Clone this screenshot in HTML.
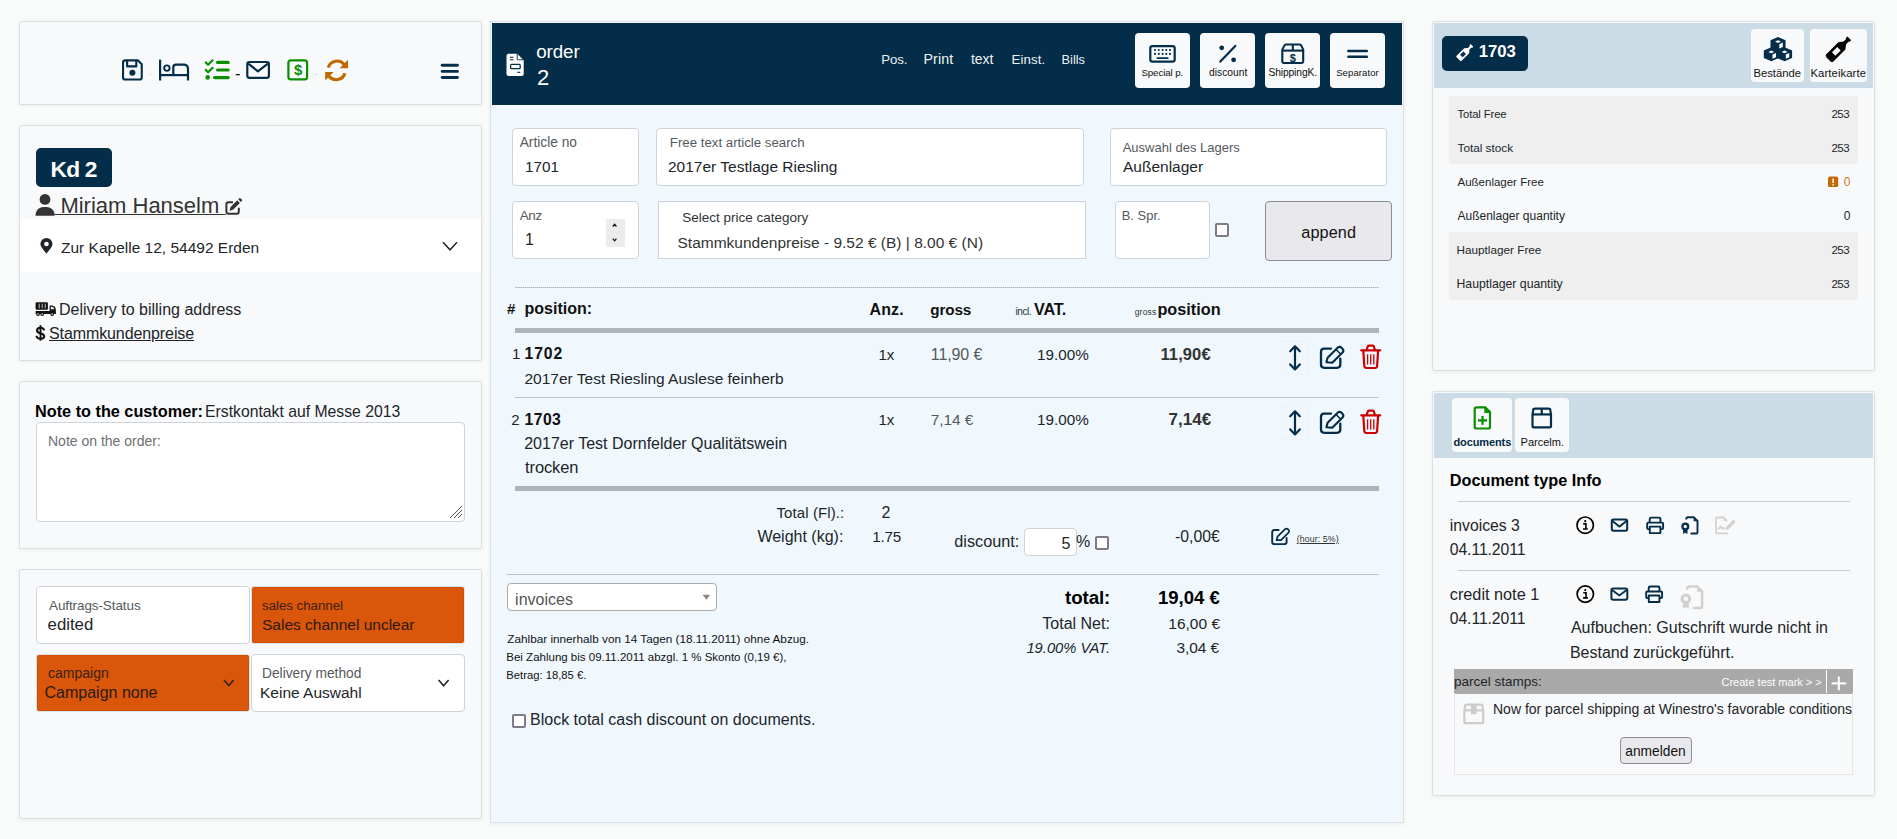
<!DOCTYPE html>
<html><head><meta charset="utf-8"><title>order</title>
<style>
html,body{margin:0;padding:0;width:1897px;height:839px;overflow:hidden;background:#f9fafa;font-family:"Liberation Sans",sans-serif}
.t{position:absolute;line-height:120px;white-space:nowrap}
svg{display:block}
</style></head><body>
<div style="position:absolute;left:19px;top:21px;width:463px;height:84px;box-sizing:border-box;background:#f8f9fa;border:1px solid #dcdfe3;border-radius:2px;box-shadow:0 1px 4px rgba(0,0,0,0.06)"></div>
<div style="position:absolute;left:19px;top:125px;width:463px;height:236px;box-sizing:border-box;background:#f8f9fa;border:1px solid #dcdfe3;border-radius:2px;box-shadow:0 1px 4px rgba(0,0,0,0.06)"></div>
<div style="position:absolute;left:20px;top:219px;width:461px;height:53px;box-sizing:border-box;background:#ffffff"></div>
<div style="position:absolute;left:19px;top:381px;width:463px;height:168px;box-sizing:border-box;background:#f8f9fa;border:1px solid #dcdfe3;border-radius:2px;box-shadow:0 1px 4px rgba(0,0,0,0.06)"></div>
<div style="position:absolute;left:19px;top:569px;width:463px;height:250px;box-sizing:border-box;background:#f8f9fa;border:1px solid #dcdfe3;border-radius:2px;box-shadow:0 1px 4px rgba(0,0,0,0.06)"></div>
<div style="position:absolute;left:490px;top:21px;width:914px;height:802px;box-sizing:border-box;background:#f0f8fe;border:1px solid #dcdfe3;box-shadow:0 1px 4px rgba(0,0,0,0.06)"></div>
<div style="position:absolute;left:492px;top:23px;width:910px;height:82px;box-sizing:border-box;background:#032d48"></div>
<div style="position:absolute;left:1432px;top:21px;width:443px;height:350px;box-sizing:border-box;background:#f8f9fa;border:1px solid #dcdfe3;border-radius:2px;box-shadow:0 1px 4px rgba(0,0,0,0.06)"></div>
<div style="position:absolute;left:1434px;top:23px;width:439px;height:65px;box-sizing:border-box;background:#cbdce6"></div>
<div style="position:absolute;left:1432px;top:391px;width:443px;height:405px;box-sizing:border-box;background:#f8f9fa;border:1px solid #dcdfe3;border-radius:2px;box-shadow:0 1px 4px rgba(0,0,0,0.06)"></div>
<div style="position:absolute;left:1434px;top:393px;width:439px;height:65px;box-sizing:border-box;background:#cbdce6"></div>
<div style="position:absolute;left:36px;top:148px;width:76px;height:39px;box-sizing:border-box;background:#032d48;border-radius:5px"></div>
<div style="position:absolute;left:36px;top:422px;width:429px;height:100px;box-sizing:border-box;background:#fff;border:1px solid #ced4da;border-radius:4px"></div>
<div style="position:absolute;left:36px;top:586px;width:214px;height:58px;box-sizing:border-box;background:#fff;border:1px solid #ced4da;border-radius:4px"></div>
<div style="position:absolute;left:251px;top:586px;width:214px;height:58px;box-sizing:border-box;background:#d9560b;border:1px solid #d6e4ee;border-radius:3px;box-shadow:inset 0 0 0 1px #d84c00"></div>
<div style="position:absolute;left:36px;top:654px;width:214px;height:58px;box-sizing:border-box;background:#d9560b;border:1px solid #d6e4ee;border-radius:3px;box-shadow:inset 0 0 0 1px #d84c00"></div>
<div style="position:absolute;left:251px;top:654px;width:214px;height:58px;box-sizing:border-box;background:#fff;border:1px solid #ced4da;border-radius:4px"></div>
<div style="position:absolute;left:1135px;top:33px;width:55px;height:55px;box-sizing:border-box;background:#f8f9fa;border-radius:4px"></div>
<div style="position:absolute;left:1200px;top:33px;width:55px;height:55px;box-sizing:border-box;background:#f8f9fa;border-radius:4px"></div>
<div style="position:absolute;left:1265px;top:33px;width:55px;height:55px;box-sizing:border-box;background:#f8f9fa;border-radius:4px"></div>
<div style="position:absolute;left:1330px;top:33px;width:55px;height:55px;box-sizing:border-box;background:#f8f9fa;border-radius:4px"></div>
<div style="position:absolute;left:512px;top:128px;width:127px;height:58px;box-sizing:border-box;background:#fff;border:1px solid #ced4da;border-radius:4px"></div>
<div style="position:absolute;left:656px;top:128px;width:428px;height:58px;box-sizing:border-box;background:#fff;border:1px solid #ced4da;border-radius:4px"></div>
<div style="position:absolute;left:1110px;top:128px;width:277px;height:58px;box-sizing:border-box;background:#fff;border:1px solid #ced4da;border-radius:4px"></div>
<div style="position:absolute;left:512px;top:201px;width:127px;height:58px;box-sizing:border-box;background:#fff;border:1px solid #ced4da;border-radius:4px"></div>
<div style="position:absolute;left:606px;top:219px;width:19px;height:28px;box-sizing:border-box;background:#ececec"></div>
<div style="position:absolute;left:658px;top:201px;width:428px;height:58px;box-sizing:border-box;background:#fff;border:1px solid #ced4da"></div>
<div style="position:absolute;left:1115px;top:201px;width:95px;height:58px;box-sizing:border-box;background:#fff;border:1px solid #ced4da;border-radius:4px"></div>
<div style="position:absolute;left:1215px;top:223px;width:14px;height:14px;box-sizing:border-box;background:#fff;border:2px solid #7d7b8a;border-radius:2px"></div>
<div style="position:absolute;left:1265px;top:201px;width:127px;height:60px;box-sizing:border-box;background:#e9e8ed;border:1px solid #8a8d92;border-radius:4px"></div>
<div style="position:absolute;left:515px;top:287px;width:864px;height:1px;box-sizing:border-box;background:repeating-linear-gradient(90deg,#aab0b4 0 1px,#d2d7da 1px 2px)"></div>
<div style="position:absolute;left:515px;top:328px;width:864px;height:5px;box-sizing:border-box;background:#aeb4b8"></div>
<div style="position:absolute;left:515px;top:397px;width:864px;height:1px;box-sizing:border-box;background:repeating-linear-gradient(90deg,#aab0b4 0 1px,#d2d7da 1px 2px)"></div>
<div style="position:absolute;left:515px;top:486px;width:864px;height:5px;box-sizing:border-box;background:#aeb4b8"></div>
<div style="position:absolute;left:507px;top:574px;width:872px;height:1px;box-sizing:border-box;background:repeating-linear-gradient(90deg,#aab0b4 0 1px,#d2d7da 1px 2px)"></div>
<div style="position:absolute;left:1282px;top:341px;width:26px;height:34px;box-sizing:border-box;border:1px dotted #e9eef2"></div>
<div style="position:absolute;left:1282px;top:406px;width:26px;height:34px;box-sizing:border-box;border:1px dotted #e9eef2"></div>
<div style="position:absolute;left:1024px;top:528px;width:53px;height:28px;box-sizing:border-box;background:#fff;border:1px solid #ced4da;border-radius:4px"></div>
<div style="position:absolute;left:1095px;top:536px;width:14px;height:14px;box-sizing:border-box;background:#fff;border:2px solid #7d7b8a;border-radius:2px"></div>
<div style="position:absolute;left:507px;top:583px;width:210px;height:28px;box-sizing:border-box;background:#fff;border:1px solid #aaa;border-radius:4px"></div>
<div style="position:absolute;left:512px;top:714px;width:14px;height:14px;box-sizing:border-box;background:#fff;border:2px solid #7d7b8a;border-radius:2px"></div>
<div style="position:absolute;left:1442px;top:36px;width:86px;height:35px;box-sizing:border-box;background:#032d48;border-radius:5px"></div>
<div style="position:absolute;left:1751px;top:29px;width:53px;height:53px;box-sizing:border-box;background:#f8f9fa;border-radius:4px"></div>
<div style="position:absolute;left:1810px;top:29px;width:57px;height:53px;box-sizing:border-box;background:#f8f9fa;border-radius:4px"></div>
<div style="position:absolute;left:1449px;top:96px;width:409px;height:68px;box-sizing:border-box;background:#efefef"></div>
<div style="position:absolute;left:1449px;top:232px;width:409px;height:68px;box-sizing:border-box;background:#efefef"></div>
<div style="position:absolute;left:1452px;top:398px;width:60px;height:54px;box-sizing:border-box;background:#f8f9fa;border-radius:4px"></div>
<div style="position:absolute;left:1515px;top:398px;width:54px;height:54px;box-sizing:border-box;background:#f8f9fa;border-radius:4px"></div>
<div style="position:absolute;left:1458px;top:501px;width:392px;height:1px;box-sizing:border-box;border-top:1px solid #c8cbce"></div>
<div style="position:absolute;left:1458px;top:570px;width:392px;height:1px;box-sizing:border-box;border-top:1px solid #c8cbce"></div>
<div style="position:absolute;left:1454px;top:669px;width:399px;height:25px;box-sizing:border-box;background:#a9a9a9"></div>
<div style="position:absolute;left:1826px;top:670px;width:1px;height:23px;box-sizing:border-box;background:#fff"></div>
<div style="position:absolute;left:1454px;top:693px;width:399px;height:82px;box-sizing:border-box;border:1px solid #e6e6e6;border-top:none"></div>
<div style="position:absolute;left:1620px;top:737px;width:72px;height:27px;box-sizing:border-box;background:#e9e8ed;border:1px solid #8a8d92;border-radius:4px"></div>
<svg style="position:absolute;left:0;top:0;overflow:visible" width="1897" height="839" viewBox="0 0 1897 839"><g fill="none" stroke="#032d48" stroke-width="2.1" stroke-linejoin="round"><path d="M125.2,60.35 H137.8 L141.75,64.3 V77.4 Q141.75,79.45 139.7,79.45 H125.1 Q123.05,79.45 123.05,77.4 V62.4 Q123.05,60.35 125.2,60.35 Z"/><path d="M127.1,60.6 V66.4 H136.3 V60.6"/></g><circle cx="132.4" cy="72.8" r="3.0" fill="#032d48"/><rect x="149" y="74" width="4" height="1" fill="#e3e5e8"/><g fill="none" stroke="#032d48" stroke-width="2.2"><path d="M160.1,59.6 V80.5"/><path d="M160.1,75.1 H188"/><path d="M173.3,75.1 V67.2 Q173.3,64.6 175.9,64.6 H183.6 Q188,64.6 188,69 V80.5"/><circle cx="166.9" cy="68.1" r="2.75" stroke-width="1.9"/></g><g fill="none" stroke="#0a8f00" stroke-width="2.2" stroke-linecap="round" stroke-linejoin="round"><path d="M205.8,62.4 L208.1,64.8 L212.6,60.3"/><path d="M205.8,69.9 L208.1,72.3 L212.6,67.8"/></g><circle cx="207.7" cy="77.4" r="2.3" fill="#0a8f00"/><g stroke="#0a8f00" stroke-width="3.1" stroke-linecap="round"><path d="M217.5,62.4 H228.2"/><path d="M217.5,70 H228.2"/><path d="M214.6,77.6 H228.2"/></g><rect x="235.8" y="74" width="4" height="1.3" fill="#111"/><g fill="none" stroke="#032d48" stroke-width="2.2" stroke-linejoin="round"><rect x="247.3" y="62" width="21.6" height="15.8" rx="2"/><path d="M248.3,63.6 L257.9,71.3 L267.9,63.6"/></g><rect x="288.4" y="60.4" width="18.7" height="19" rx="2.4" fill="none" stroke="#0a8f00" stroke-width="2.2"/><text x="298.2" y="74.8" text-anchor="middle" font-family="Liberation Sans" font-weight="700" font-size="15" fill="#0a8f00">$</text><rect x="314" y="74" width="4.5" height="1" fill="#e3e5e8"/><g fill="none" stroke="#c36800" stroke-width="3.1"><path d="M328.2,67.6 A9.2,9.2 0 0 1 344.3,64.6"/><path d="M344.9,73.2 A9.2,9.2 0 0 1 328.9,76.2"/></g><path d="M348,59.8 V68.2 H339.6 Z" fill="#c36800"/><path d="M325.2,80.5 V72.1 H333.6 Z" fill="#c36800"/><g stroke="#032d48" stroke-width="2.9" stroke-linecap="round"><path d="M442.2,65.2 H457.4"/><path d="M442.2,71.4 H457.4"/><path d="M442.2,77.5 H457.4"/></g><circle cx="45" cy="199.4" r="5.4" fill="#333"/><path d="M35.5,215.8 C35.5,210.5 38.6,207 43.6,207 H46.4 C51.5,207 54.7,210.5 54.7,215.8 Z" fill="#333"/><rect x="54.7" y="214" width="171" height="1" fill="#333"/><g fill="none" stroke="#333" stroke-width="2"><path d="M233,202.3 H228.6 Q226.4,202.3 226.4,204.5 V211.6 Q226.4,213.8 228.6,213.8 H236.6 Q238.8,213.8 238.8,211.6 V207.8"/></g><path d="M229.4,210.9 L230.6,206.9 L237.2,200.3 L239.9,203 L233.3,209.6 Z" fill="#333"/><path d="M238.2,199.3 L239.1,198.4 Q239.9,197.6 240.7,198.4 L241.8,199.5 Q242.6,200.3 241.8,201.1 L240.9,202 Z" fill="#333"/><path d="M46.45,253.8 C44.2,250.6 40.4,246.9 40.4,244 A6.05,6.05 0 0 1 52.5,244 C52.5,246.9 48.7,250.6 46.45,253.8 Z" fill="#212529"/><circle cx="46.45" cy="244" r="2.3" fill="#fff"/><path d="M443,242.2 L450,249.8 L457,242.2" fill="none" stroke="#212529" stroke-width="1.5"/><rect x="35.6" y="302.2" width="12.3" height="7.6" rx="1.2" fill="#111"/><g stroke="#ddd" stroke-width="0.9"><path d="M39.2,303.6 V308.4"/><path d="M42.2,303.6 V308.4"/><path d="M45.2,303.6 V308.4"/></g><path d="M49.6,305.5 H52.5 Q55.9,306.5 55.9,310.5 V314 H35.6 V311 H49.6 Z" fill="#111"/><path d="M50.8,306.7 H52.3 Q54,307.3 54.3,309.3 H50.8 Z" fill="#eee"/><circle cx="38" cy="314" r="1.9" fill="#111"/><circle cx="42.2" cy="314" r="1.9" fill="#111"/><circle cx="52.2" cy="314" r="1.9" fill="#111"/><circle cx="38" cy="314" r="0.8" fill="#eee"/><circle cx="42.2" cy="314" r="0.8" fill="#eee"/><circle cx="52.2" cy="314" r="0.8" fill="#eee"/><path d="M40.5,325.2 V340.7" stroke="#111" stroke-width="1.9"/><path d="M43.9,329.6 C43.2,328.3 42,327.7 40.4,327.7 C38.3,327.7 37,328.7 37,330.6 C37,334.6 44.2,332.6 44.2,336.2 C44.2,337.9 42.8,338.7 40.6,338.7 C38.7,338.7 37.3,338 36.6,336.6" fill="none" stroke="#111" stroke-width="2.1" stroke-linecap="round"/><g stroke="#555" stroke-width="1"><path d="M450,518 L462,506"/><path d="M454,518 L462,510"/><path d="M458,518 L462,514"/></g><path d="M224,680 L228.8,685.6 L233.6,680" fill="none" stroke="#3a2110" stroke-width="1.6"/><path d="M438.6,680 L443.6,685.8 L448.6,680" fill="none" stroke="#212529" stroke-width="1.6"/><path d="M508.5,53.8 H517.2 L523.7,60.3 V73.9 Q523.7,76 521.6,76 H508.6 Q506.5,76 506.5,73.9 V55.9 Q506.5,53.8 508.5,53.8 Z" fill="#fff"/><path d="M517.2,53.8 V59.8 H523.7" fill="none" stroke="#032d48" stroke-width="0.9"/><g stroke="#032d48" stroke-width="1.1"><path d="M510,57.3 H513.4"/><path d="M510,59.8 H513.4"/><path d="M517.2,72.3 H520.3"/></g><rect x="510.6" y="64.3" width="9.6" height="4.4" rx="1" fill="none" stroke="#032d48" stroke-width="1.3"/><rect x="1150.3" y="46.1" width="24.4" height="15.6" rx="2.2" fill="none" stroke="#032d48" stroke-width="2.2"/><circle cx="1155" cy="50" r="1.05" fill="#032d48"/><circle cx="1155" cy="53.9" r="1.05" fill="#032d48"/><circle cx="1158.8" cy="50" r="1.05" fill="#032d48"/><circle cx="1158.8" cy="53.9" r="1.05" fill="#032d48"/><circle cx="1162.6" cy="50" r="1.05" fill="#032d48"/><circle cx="1162.6" cy="53.9" r="1.05" fill="#032d48"/><circle cx="1166.3" cy="50" r="1.05" fill="#032d48"/><circle cx="1166.3" cy="53.9" r="1.05" fill="#032d48"/><circle cx="1170" cy="50" r="1.05" fill="#032d48"/><circle cx="1170" cy="53.9" r="1.05" fill="#032d48"/><path d="M1157.3,58.1 H1167.8" stroke="#032d48" stroke-width="1.7" stroke-linecap="round"/><circle cx="1221.7" cy="47.8" r="2.4" fill="#032d48"/><circle cx="1233.6" cy="59.8" r="2.4" fill="#032d48"/><path d="M1220.3,61.6 L1235.3,45.9" stroke="#032d48" stroke-width="2.2" stroke-linecap="round"/><g fill="none" stroke="#032d48" stroke-width="2.1" stroke-linejoin="round"><path d="M1286,44.5 H1299.6 Q1300.8,44.5 1301.3,45.6 L1303.2,49.6 V61.6 Q1303.2,63 1301.8,63 H1283.7 Q1282.3,63 1282.3,61.6 V49.6 L1284.3,45.6 Q1284.8,44.5 1286,44.5 Z"/><path d="M1282.6,50.6 H1303"/><path d="M1292.8,44.6 V50.6"/></g><text x="1292.8" y="61.6" text-anchor="middle" font-family="Liberation Sans" font-weight="700" font-size="11" fill="#032d48">$</text><g stroke="#032d48" stroke-width="2.5" stroke-linecap="round"><path d="M1348.4,51 H1366.8"/><path d="M1348.4,56.8 H1366.8"/></g><path d="M612.8,226.5 L614.6,224.3 L616.4,226.5" fill="none" stroke="#111" stroke-width="1.2"/><path d="M612.8,238.6 L614.6,240.8 L616.4,238.6" fill="none" stroke="#111" stroke-width="1.2"/><g transform="translate(0,0)"><path d="M1295,347.5 V368.3" stroke="#032d48" stroke-width="2.2"/><path d="M1290.2,351.3 L1295,346.3 L1299.8,351.3" fill="none" stroke="#032d48" stroke-width="2.2" stroke-linecap="round" stroke-linejoin="round"/><path d="M1290.2,364.4 L1295,369.4 L1299.8,364.4" fill="none" stroke="#032d48" stroke-width="2.2" stroke-linecap="round" stroke-linejoin="round"/><path d="M1331,348.6 H1324.2 Q1321,348.6 1321,351.8 V364.6 Q1321,367.8 1324.2,367.8 H1337.1 Q1340.3,367.8 1340.3,364.6 V358.6" fill="none" stroke="#032d48" stroke-width="2.3" stroke-linecap="round"/><path d="M1326.4,362.3 L1327.6,357.7 L1337.4,347.9 Q1339.6,345.7 1341.8,347.9 L1342.3,348.4 Q1344.5,350.6 1342.3,352.8 L1332.5,362.6 Z" fill="none" stroke="#032d48" stroke-width="2.1" stroke-linejoin="round"/><path d="M1336,349.5 L1340.8,354.3" stroke="#032d48" stroke-width="1.6"/><g fill="none" stroke="#cc0000" stroke-width="2.2" stroke-linecap="round" stroke-linejoin="round"><path d="M1361.2,350.3 H1380.2"/><path d="M1366.6,350 L1367.8,346.4 Q1368.2,345.7 1369,345.7 H1372.6 Q1373.4,345.7 1373.8,346.4 L1374.9,350"/><path d="M1363.3,350.6 L1364.3,366 Q1364.5,368 1366.4,368 H1375 Q1376.9,368 1377.1,366 L1378.1,350.6"/></g><g stroke="#cc0000" stroke-width="1.3"><path d="M1367.6,354.3 V364.5"/><path d="M1370.7,354.3 V364.5"/><path d="M1373.8,354.3 V364.5"/></g></g><g transform="translate(0,65)"><path d="M1295,347.5 V368.3" stroke="#032d48" stroke-width="2.2"/><path d="M1290.2,351.3 L1295,346.3 L1299.8,351.3" fill="none" stroke="#032d48" stroke-width="2.2" stroke-linecap="round" stroke-linejoin="round"/><path d="M1290.2,364.4 L1295,369.4 L1299.8,364.4" fill="none" stroke="#032d48" stroke-width="2.2" stroke-linecap="round" stroke-linejoin="round"/><path d="M1331,348.6 H1324.2 Q1321,348.6 1321,351.8 V364.6 Q1321,367.8 1324.2,367.8 H1337.1 Q1340.3,367.8 1340.3,364.6 V358.6" fill="none" stroke="#032d48" stroke-width="2.3" stroke-linecap="round"/><path d="M1326.4,362.3 L1327.6,357.7 L1337.4,347.9 Q1339.6,345.7 1341.8,347.9 L1342.3,348.4 Q1344.5,350.6 1342.3,352.8 L1332.5,362.6 Z" fill="none" stroke="#032d48" stroke-width="2.1" stroke-linejoin="round"/><path d="M1336,349.5 L1340.8,354.3" stroke="#032d48" stroke-width="1.6"/><g fill="none" stroke="#cc0000" stroke-width="2.2" stroke-linecap="round" stroke-linejoin="round"><path d="M1361.2,350.3 H1380.2"/><path d="M1366.6,350 L1367.8,346.4 Q1368.2,345.7 1369,345.7 H1372.6 Q1373.4,345.7 1373.8,346.4 L1374.9,350"/><path d="M1363.3,350.6 L1364.3,366 Q1364.5,368 1366.4,368 H1375 Q1376.9,368 1377.1,366 L1378.1,350.6"/></g><g stroke="#cc0000" stroke-width="1.3"><path d="M1367.6,354.3 V364.5"/><path d="M1370.7,354.3 V364.5"/><path d="M1373.8,354.3 V364.5"/></g></g><path d="M1278.6,530 H1274.6 Q1272.2,530 1272.2,532.4 V541.9 Q1272.2,544.1 1274.6,544.1 H1284.2 Q1286.6,544.1 1286.6,541.9 V538" fill="none" stroke="#032d48" stroke-width="1.9" stroke-linecap="round"/><path d="M1276.6,540.2 L1277.5,536.7 L1284.8,529.4 Q1286.4,527.8 1288,529.4 L1288.3,529.7 Q1289.9,531.3 1288.3,532.9 L1281,540.2 Z" fill="none" stroke="#032d48" stroke-width="1.7" stroke-linejoin="round"/><path d="M702.6,594.8 H710.2 L706.4,599.8 Z" fill="#888"/><g transform="rotate(45 1465.5 51.9)"><path d="M1463.6,42.8 H1467.4 V44.6 H1466.6 V47.4 L1469,50.2 V61 Q1469,62 1468,62 H1463 Q1462,62 1462,61 V50.2 L1464.4,47.4 V44.6 H1463.6 Z" fill="#fff"/><rect x="1463.7" y="53" width="3.6" height="4.8" fill="#032d48"/></g><g fill="#032d48"><path d="M1778,37 L1785.5,40.2 V48.5 L1778,51.8 L1770.5,48.5 V40.2 Z"/><path d="M1771.3,47.3 L1778.8,50.5 V58.1 L1771.3,61.3 L1763.8,58.1 V50.5 Z"/><path d="M1784.6,47.3 L1792.1,50.5 V58.1 L1784.6,61.3 L1777.1,58.1 V50.5 Z"/></g><g fill="#fff"><path d="M1778,40.2 L1781,41.6 L1778,43 L1775,41.6 Z"/><path d="M1779.3,44.2 L1782.8,42.6 V47 L1779.3,48.5 Z"/><path d="M1771.3,50.5 L1774.3,51.9 L1771.3,53.3 L1768.3,51.9 Z"/><path d="M1772.5,54.5 L1776,52.9 V57.3 L1772.5,58.8 Z"/><path d="M1784.6,50.5 L1787.6,51.9 L1784.6,53.3 L1781.6,51.9 Z"/><path d="M1785.8,54.5 L1789.3,52.9 V57.3 L1785.8,58.8 Z"/></g><g transform="rotate(45 1838.8 48.9)"><path d="M1836.2,34 H1841.4 V36.6 H1840.6 V40.4 L1843.8,44.6 V61.6 Q1843.8,63.6 1841.8,63.6 H1835.8 Q1833.8,63.6 1833.8,61.6 V44.6 L1837,40.4 V36.6 H1836.2 Z" fill="#000"/><rect x="1836.4" y="48.6" width="4.8" height="7.6" fill="#f8f9fa"/></g><rect x="1828" y="176.6" width="10.2" height="10.4" rx="1.6" fill="#c36a0a"/><rect x="1832.4" y="178.6" width="1.5" height="4.4" fill="#fff"/><rect x="1832.4" y="184" width="1.5" height="1.5" fill="#fff"/><path d="M1476.7,407.3 H1485.2 L1490,412.1 V426.7 Q1490,428.5 1488.2,428.5 H1476.5 Q1474.7,428.5 1474.7,426.7 V409.1 Q1474.7,407.3 1476.7,407.3 Z" fill="none" stroke="#0a8f00" stroke-width="2.2" stroke-linejoin="round"/><path d="M1484.3,406.3 L1491.1,413 H1484.3 Z" fill="#0a8f00"/><g stroke="#0a8f00" stroke-width="2.3"><path d="M1478,420.4 H1487"/><path d="M1482.5,416 V424.8"/></g><g fill="none" stroke="#032d48" stroke-width="2.2" stroke-linejoin="round"><path d="M1535.4,408.6 H1548.1 Q1549.5,408.6 1550.1,409.1 L1551.0,414.43 V426.0 Q1551.0,427.4 1549.6,427.4 H1533.9 Q1532.5,427.4 1532.5,426.0 V414.43 L1533.4,409.1 Q1534.0,408.6 1535.4,408.6 Z"/><path d="M1532.5,414.43 H1551.0"/><path d="M1541.75,408.6 V414.43"/></g><g fill="none" stroke="#cccccc" stroke-width="2.2" stroke-linejoin="round"><path d="M1467.3,704.6 H1480.3 Q1481.7,704.6 1482.3,705.1 L1483.2,710.364 V721.8 Q1483.2,723.1999999999999 1481.8,723.1999999999999 H1465.8 Q1464.3999999999999,723.1999999999999 1464.3999999999999,721.8 V710.364 L1465.3,705.1 Q1465.8999999999999,704.6 1467.3,704.6 Z"/><path d="M1464.3999999999999,710.364 H1483.2"/></g><rect x="1471.0" y="704.5" width="5.6" height="9.775999999999978" rx="0.8" fill="#cccccc"/><circle cx="1585.2" cy="525.2" r="8.2" fill="none" stroke="#000" stroke-width="1.7"/><circle cx="1585.2" cy="521.2" r="1.1" fill="#000"/><path d="M1583.2,523.9000000000001 H1585.9 V528.8000000000001 M1583.0,529.0 H1587.8" fill="none" stroke="#000" stroke-width="1.6"/><rect x="1611.8" y="519.5" width="15.400000000000091" height="11.299999999999955" rx="1.8" fill="none" stroke="#032d48" stroke-width="2"/><path d="M1612.3999999999999,521.1 L1619.5,526.48 L1626.6000000000001,521.1" fill="none" stroke="#032d48" stroke-width="1.9"/><g fill="none" stroke="#032d48" stroke-width="1.9" stroke-linejoin="round"><path d="M1649.7,522.3000000000001 V519.0 Q1649.7,517.6 1651.2,517.6 H1659.0 Q1660.5,517.6 1660.5,519.0 V522.3000000000001"/><path d="M1649.4,529.1 H1648.1000000000001 Q1647.2,529.1 1647.2,528.1 V523.6 Q1647.2,522.6 1648.2,522.6 H1662.1000000000001 Q1663.1000000000001,522.6 1663.1000000000001,523.6 V528.1 Q1663.1000000000001,529.1 1662.2,529.1 H1660.8"/><rect x="1649.8" y="526.6" width="10.6" height="6.5"/></g><g transform="translate(1680.3,516.3) scale(1.0)"><path d="M6,3.2 V2.6 Q6,1 7.6,1 H13.6 L17.2,4.6 V15.6 Q17.2,17.2 15.6,17.2 H10.2" fill="none" stroke="#032d48" stroke-width="1.9" stroke-linejoin="round"/><path d="M13.4,0.5 L17.8,4.9 H13.4 Z" fill="#032d48"/><circle cx="5" cy="10.2" r="4" fill="#032d48"/><circle cx="5" cy="10.2" r="1.7" fill="#f8f9fa"/><path d="M2.8,13 V17.6 L5,16.4 L7.2,17.6 V13 Z" fill="#032d48"/></g><g fill="none" stroke="#d2d2d2" stroke-width="1.8" stroke-linejoin="round"><path d="M1727,521 L1723.8,517.5 H1717.6 Q1716,517.5 1716,519.1 V531.7 Q1716,533.3 1717.6,533.3 H1728"/><path d="M1718,529.5 L1720.5,526.5 L1722.5,529 L1724.5,527.5"/></g><path d="M1725.2,529.8 L1726,527 L1732.4,520.6 Q1733.6,519.4 1734.8,520.6 Q1736,521.8 1734.8,523 L1728.4,529.4 Z" fill="#d2d2d2"/><path d="M1723.8,517.5 V521 H1727" fill="#d2d2d2"/><circle cx="1585.3" cy="594.1" r="8.2" fill="none" stroke="#000" stroke-width="1.7"/><circle cx="1585.3" cy="590.1" r="1.1" fill="#000"/><path d="M1583.3,592.8000000000001 H1586.0 V597.7 M1583.1,597.9 H1587.8999999999999" fill="none" stroke="#000" stroke-width="1.6"/><rect x="1611.4" y="588.4" width="15.899999999999864" height="11.399999999999977" rx="1.8" fill="none" stroke="#032d48" stroke-width="2"/><path d="M1612.0,590.0 L1619.35,595.4399999999999 L1626.7,590.0" fill="none" stroke="#032d48" stroke-width="1.9"/><g fill="none" stroke="#032d48" stroke-width="1.9" stroke-linejoin="round"><path d="M1648.7,591.2 V587.9 Q1648.7,586.5 1650.2,586.5 H1658.0 Q1659.5,586.5 1659.5,587.9 V591.2"/><path d="M1648.4,598.0 H1647.1000000000001 Q1646.2,598.0 1646.2,597.0 V592.5 Q1646.2,591.5 1647.2,591.5 H1661.1000000000001 Q1662.1000000000001,591.5 1662.1000000000001,592.5 V597.0 Q1662.1000000000001,598.0 1661.2,598.0 H1659.8"/><rect x="1648.8" y="595.5" width="10.6" height="6.5"/></g><g transform="translate(1679.2,585.2) scale(1.33)"><path d="M6,3.2 V2.6 Q6,1 7.6,1 H13.6 L17.2,4.6 V15.6 Q17.2,17.2 15.6,17.2 H10.2" fill="none" stroke="#d0d0d0" stroke-width="1.9" stroke-linejoin="round"/><path d="M13.4,0.5 L17.8,4.9 H13.4 Z" fill="#d0d0d0"/><circle cx="5" cy="10.2" r="4" fill="#d0d0d0"/><circle cx="5" cy="10.2" r="1.7" fill="#f8f9fa"/><path d="M2.8,13 V17.6 L5,16.4 L7.2,17.6 V13 Z" fill="#d0d0d0"/></g><g stroke="#fff" stroke-width="2"><path d="M1831.6,683.4 H1846"/><path d="M1838.8,676.5 V690.3"/></g></svg>
<div class="t" style="left:50.6px;top:109px;font-size:22.75px;color:#ffffff;font-weight:700;letter-spacing:-0.8px">Kd 2</div>
<div class="t" style="left:60.4px;top:146px;font-size:22.0px;color:#333">Miriam Hanselm</div>
<div class="t" style="left:61px;top:188px;font-size:15.5px;color:#212529">Zur Kapelle 12, 54492 Erden</div>
<div class="t" style="left:59px;top:250px;font-size:16.0px;color:#212529">Delivery to billing address</div>
<div class="t" style="left:49px;top:274px;font-size:16.0px;color:#212529;letter-spacing:-0.1px;text-decoration:underline">Stammkundenpreise</div>
<div class="t" style="left:35px;top:351px;font-size:16.25px;color:#000;font-weight:700">Note to the customer:</div>
<div class="t" style="left:205px;top:352px;font-size:15.75px;color:#212529">Erstkontakt auf Messe 2013</div>
<div class="t" style="left:48px;top:381px;font-size:14.0px;color:#6c6f72">Note on the order:</div>
<div class="t" style="left:49px;top:546px;font-size:13.5px;color:#55595c;letter-spacing:-0.1px">Auftrags-Status</div>
<div class="t" style="left:47.6px;top:565px;font-size:16.75px;color:#212529">edited</div>
<div class="t" style="left:262px;top:546px;font-size:13.25px;color:#3a2110">sales channel</div>
<div class="t" style="left:262px;top:565px;font-size:15.5px;color:#2a1a10">Sales channel unclear</div>
<div class="t" style="left:48px;top:613px;font-size:14.0px;color:#3a2110">campaign</div>
<div class="t" style="left:44.5px;top:633px;font-size:16.0px;color:#2a1a10">Campaign none</div>
<div class="t" style="left:262px;top:614px;font-size:13.75px;color:#55595c">Delivery method</div>
<div class="t" style="left:260px;top:633px;font-size:15.5px;color:#212529">Keine Auswahl</div>
<div class="t" style="left:536.3px;top:-8px;font-size:18.75px;color:#ffffff;letter-spacing:-0.1px">order</div>
<div class="t" style="left:537px;top:18px;font-size:22px;color:#ffffff">2</div>
<div class="t" style="left:881.3px;top:0px;font-size:13.25px;color:#eef2f5;letter-spacing:-0.1px">Pos.</div>
<div class="t" style="left:923.5px;top:-1px;font-size:14.25px;color:#eef2f5;letter-spacing:0.1px">Print</div>
<div class="t" style="left:971px;top:-1px;font-size:14.0px;color:#eef2f5;letter-spacing:-0.1px">text</div>
<div class="t" style="left:1011.5px;top:0px;font-size:13.25px;color:#eef2f5;letter-spacing:0.1px">Einst.</div>
<div class="t" style="left:1061.6px;top:0px;font-size:12.75px;color:#eef2f5">Bills</div>
<div class="t" style="left:1141.4px;top:13px;font-size:9.75px;color:#111;letter-spacing:-0.1px">Special p.</div>
<div class="t" style="left:1209.1px;top:13px;font-size:10.25px;color:#111">discount</div>
<div class="t" style="left:1268.4px;top:13px;font-size:10.25px;color:#111;letter-spacing:-0.1px">ShippingK.</div>
<div class="t" style="left:1336.2px;top:13px;font-size:9.5px;color:#111;letter-spacing:0.1px">Separator</div>
<div class="t" style="left:519.7px;top:83px;font-size:13.75px;color:#55595c">Article no</div>
<div class="t" style="left:525px;top:107px;font-size:15.25px;color:#212529">1701</div>
<div class="t" style="left:669.8px;top:83px;font-size:13.25px;color:#55595c">Free text article search</div>
<div class="t" style="left:668px;top:107px;font-size:15.5px;color:#212529">2017er Testlage Riesling</div>
<div class="t" style="left:1122.7px;top:88px;font-size:13.0px;color:#55595c">Auswahl des Lagers</div>
<div class="t" style="left:1123px;top:107px;font-size:15.5px;color:#212529">Außenlager</div>
<div class="t" style="left:519.7px;top:156px;font-size:13.5px;color:#55595c;letter-spacing:-0.4px">Anz</div>
<div class="t" style="left:525px;top:180px;font-size:16px;color:#212529">1</div>
<div class="t" style="left:682.3px;top:158px;font-size:13.5px;color:#333">Select price category</div>
<div class="t" style="left:677.5px;top:183px;font-size:15.5px;color:#333">Stammkundenpreise - 9.52 € (B) | 8.00 € (N)</div>
<div class="t" style="left:1121.7px;top:156px;font-size:13.0px;color:#55595c">B. Spr.</div>
<div class="t" style="left:1301.3px;top:172px;font-size:16.25px;color:#111;letter-spacing:0.1px">append</div>
<div class="t" style="left:507px;top:249px;font-size:15px;color:#111;font-weight:700">#</div>
<div class="t" style="left:524.5px;top:249px;font-size:16.0px;color:#111;font-weight:700">position:</div>
<div class="t" style="left:869.6px;top:250px;font-size:16.0px;color:#111;font-weight:700;letter-spacing:0.1px">Anz.</div>
<div class="t" style="left:930.2px;top:250px;font-size:15.25px;color:#111;font-weight:700;letter-spacing:-0.1px">gross</div>
<div class="t" style="left:1015.5px;top:252px;font-size:10.25px;color:#333;letter-spacing:-0.5px">incl.</div>
<div class="t" style="left:1034px;top:249px;font-size:16.25px;color:#111;font-weight:700;letter-spacing:-0.2px">VAT.</div>
<div class="t" style="left:1134.7px;top:252px;font-size:8.5px;color:#333;letter-spacing:0.2px">gross</div>
<div class="t" style="left:1157.4px;top:249px;font-size:16.25px;color:#111;font-weight:700">position</div>
<div class="t" style="left:512px;top:294px;font-size:15px;color:#212529">1</div>
<div class="t" style="left:524.5px;top:294px;font-size:15.75px;color:#111;font-weight:700;letter-spacing:0.9px">1702</div>
<div class="t" style="left:524.5px;top:319px;font-size:15.5px;color:#212529">2017er Test Riesling Auslese feinherb</div>
<div class="t" style="left:878.4px;top:295px;font-size:15px;color:#212529">1x</div>
<div class="t" style="left:930.8px;top:295px;font-size:16.0px;color:#55595c;letter-spacing:-0.1px">11,90 €</div>
<div class="t" style="left:1037px;top:295px;font-size:15.25px;color:#212529">19.00%</div>
<div class="t" style="left:1160.5px;top:294px;font-size:16.5px;color:#333;font-weight:700;letter-spacing:0.1px">11,90€</div>
<div class="t" style="left:511.3px;top:360px;font-size:15px;color:#212529">2</div>
<div class="t" style="left:524.6px;top:360px;font-size:15.75px;color:#111;font-weight:700;letter-spacing:0.4px">1703</div>
<div class="t" style="left:524.2px;top:384px;font-size:16.0px;color:#212529">2017er Test Dornfelder Qualitätswein</div>
<div class="t" style="left:525px;top:407px;font-size:16.5px;color:#212529;letter-spacing:-0.1px">trocken</div>
<div class="t" style="left:878.4px;top:360px;font-size:15px;color:#212529">1x</div>
<div class="t" style="left:930.7px;top:360px;font-size:15.5px;color:#55595c;letter-spacing:-0.1px">7,14 €</div>
<div class="t" style="left:1037px;top:360px;font-size:15.25px;color:#212529">19.00%</div>
<div class="t" style="left:1168.6px;top:360px;font-size:17.0px;color:#333;font-weight:700">7,14€</div>
<div class="t" style="left:776.5px;top:453px;font-size:15.0px;color:#212529;letter-spacing:0.1px">Total (Fl).:</div>
<div class="t" style="left:881.6px;top:453px;font-size:16px;color:#212529">2</div>
<div class="t" style="left:757.4px;top:477px;font-size:16.0px;color:#212529">Weight (kg):</div>
<div class="t" style="left:872.2px;top:477px;font-size:15.25px;color:#212529;letter-spacing:-0.2px">1.75</div>
<div class="t" style="left:954.3px;top:481px;font-size:16.25px;color:#212529">discount:</div>
<div class="t" style="left:1061.5px;top:484px;font-size:16px;color:#212529">5</div>
<div class="t" style="left:1076px;top:482px;font-size:16px;color:#212529">%</div>
<div class="t" style="left:1175.1px;top:477px;font-size:15.75px;color:#212529">-0,00€</div>
<div class="t" style="left:1296.8px;top:479px;font-size:8.75px;color:#333;letter-spacing:0.1px;text-decoration:underline">(hour: 5%)</div>
<div class="t" style="left:1065px;top:538px;font-size:18.75px;color:#000;font-weight:700;letter-spacing:-0.1px">total:</div>
<div class="t" style="left:1158px;top:538px;font-size:18.5px;color:#000;font-weight:700">19,04 €</div>
<div class="t" style="left:1042.3px;top:564px;font-size:16.0px;color:#212529">Total Net:</div>
<div class="t" style="left:1168.3px;top:564px;font-size:15.5px;color:#212529">16,00 €</div>
<div class="t" style="left:1026.4px;top:588px;font-size:14.75px;color:#212529;font-style:italic">19.00% VAT.</div>
<div class="t" style="left:1176.6px;top:588px;font-size:15.5px;color:#212529;letter-spacing:-0.1px">3,04 €</div>
<div class="t" style="left:515.1px;top:540px;font-size:16.0px;color:#555">invoices</div>
<div class="t" style="left:507.3px;top:579px;font-size:11.75px;color:#111">Zahlbar innerhalb von 14 Tagen (18.11.2011) ohne Abzug.</div>
<div class="t" style="left:506.3px;top:597px;font-size:11.5px;color:#111">Bei Zahlung bis 09.11.2011 abzgl. 1 % Skonto (0,19 €),</div>
<div class="t" style="left:506.3px;top:615px;font-size:11.25px;color:#111">Betrag: 18,85 €.</div>
<div class="t" style="left:530px;top:660px;font-size:16.0px;color:#212529">Block total cash discount on documents.</div>
<div class="t" style="left:1478.8px;top:-8px;font-size:16.75px;color:#ffffff;font-weight:700;letter-spacing:-0.1px">1703</div>
<div class="t" style="left:1753.4px;top:13px;font-size:11.25px;color:#111">Bestände</div>
<div class="t" style="left:1810.5px;top:13px;font-size:11.25px;color:#111;letter-spacing:0.1px">Karteikarte</div>
<div class="t" style="left:1457.5px;top:54px;font-size:11.25px;color:#212529;letter-spacing:-0.1px">Total Free</div>
<div class="t" style="left:1457.5px;top:88px;font-size:11.75px;color:#212529">Total stock</div>
<div class="t" style="left:1457.5px;top:122px;font-size:11.5px;color:#212529">Außenlager Free</div>
<div class="t" style="left:1457.5px;top:156px;font-size:12.0px;color:#212529">Außenlager quantity</div>
<div class="t" style="left:1456.5px;top:190px;font-size:11.75px;color:#212529">Hauptlager Free</div>
<div class="t" style="left:1456.5px;top:224px;font-size:12.25px;color:#212529">Hauptlager quantity</div>
<div class="t" style="left:1831.4px;top:54px;font-size:11.5px;color:#212529;letter-spacing:-0.5px">253</div>
<div class="t" style="left:1831.4px;top:88px;font-size:11.5px;color:#212529;letter-spacing:-0.5px">253</div>
<div class="t" style="left:1843.8px;top:122px;font-size:12px;color:#c87a1a">0</div>
<div class="t" style="left:1843.8px;top:156px;font-size:12px;color:#212529">0</div>
<div class="t" style="left:1831.4px;top:190px;font-size:11.5px;color:#212529;letter-spacing:-0.5px">253</div>
<div class="t" style="left:1831.4px;top:224px;font-size:11.5px;color:#212529;letter-spacing:-0.5px">253</div>
<div class="t" style="left:1453.4px;top:382px;font-size:11.0px;color:#052c48;font-weight:700;letter-spacing:-0.1px">documents</div>
<div class="t" style="left:1520.6px;top:382px;font-size:11.0px;color:#111">Parcelm.</div>
<div class="t" style="left:1449.8px;top:420px;font-size:16.25px;color:#000;font-weight:700">Document type Info</div>
<div class="t" style="left:1449.8px;top:466px;font-size:15.75px;color:#212529">invoices 3</div>
<div class="t" style="left:1449.8px;top:490px;font-size:15.75px;color:#212529;letter-spacing:-0.1px">04.11.2011</div>
<div class="t" style="left:1449.8px;top:534px;font-size:16.25px;color:#212529">credit note 1</div>
<div class="t" style="left:1449.8px;top:559px;font-size:15.75px;color:#212529;letter-spacing:-0.1px">04.11.2011</div>
<div class="t" style="left:1570.9px;top:568px;font-size:16.0px;color:#212529">Aufbuchen: Gutschrift wurde nicht in</div>
<div class="t" style="left:1569.9px;top:593px;font-size:16.0px;color:#212529">Bestand zurückgeführt.</div>
<div class="t" style="left:1454px;top:622px;font-size:13.5px;color:#212529">parcel stamps:</div>
<div class="t" style="left:1721.5px;top:622px;font-size:11.0px;color:#ffffff">Create test mark &gt; &gt;</div>
<div class="t" style="left:1493px;top:649px;font-size:14.0px;color:#212529">Now for parcel shipping at Winestro's favorable conditions</div>
<div class="t" style="left:1625.3px;top:692px;font-size:13.75px;color:#111">anmelden</div>
</body></html>
